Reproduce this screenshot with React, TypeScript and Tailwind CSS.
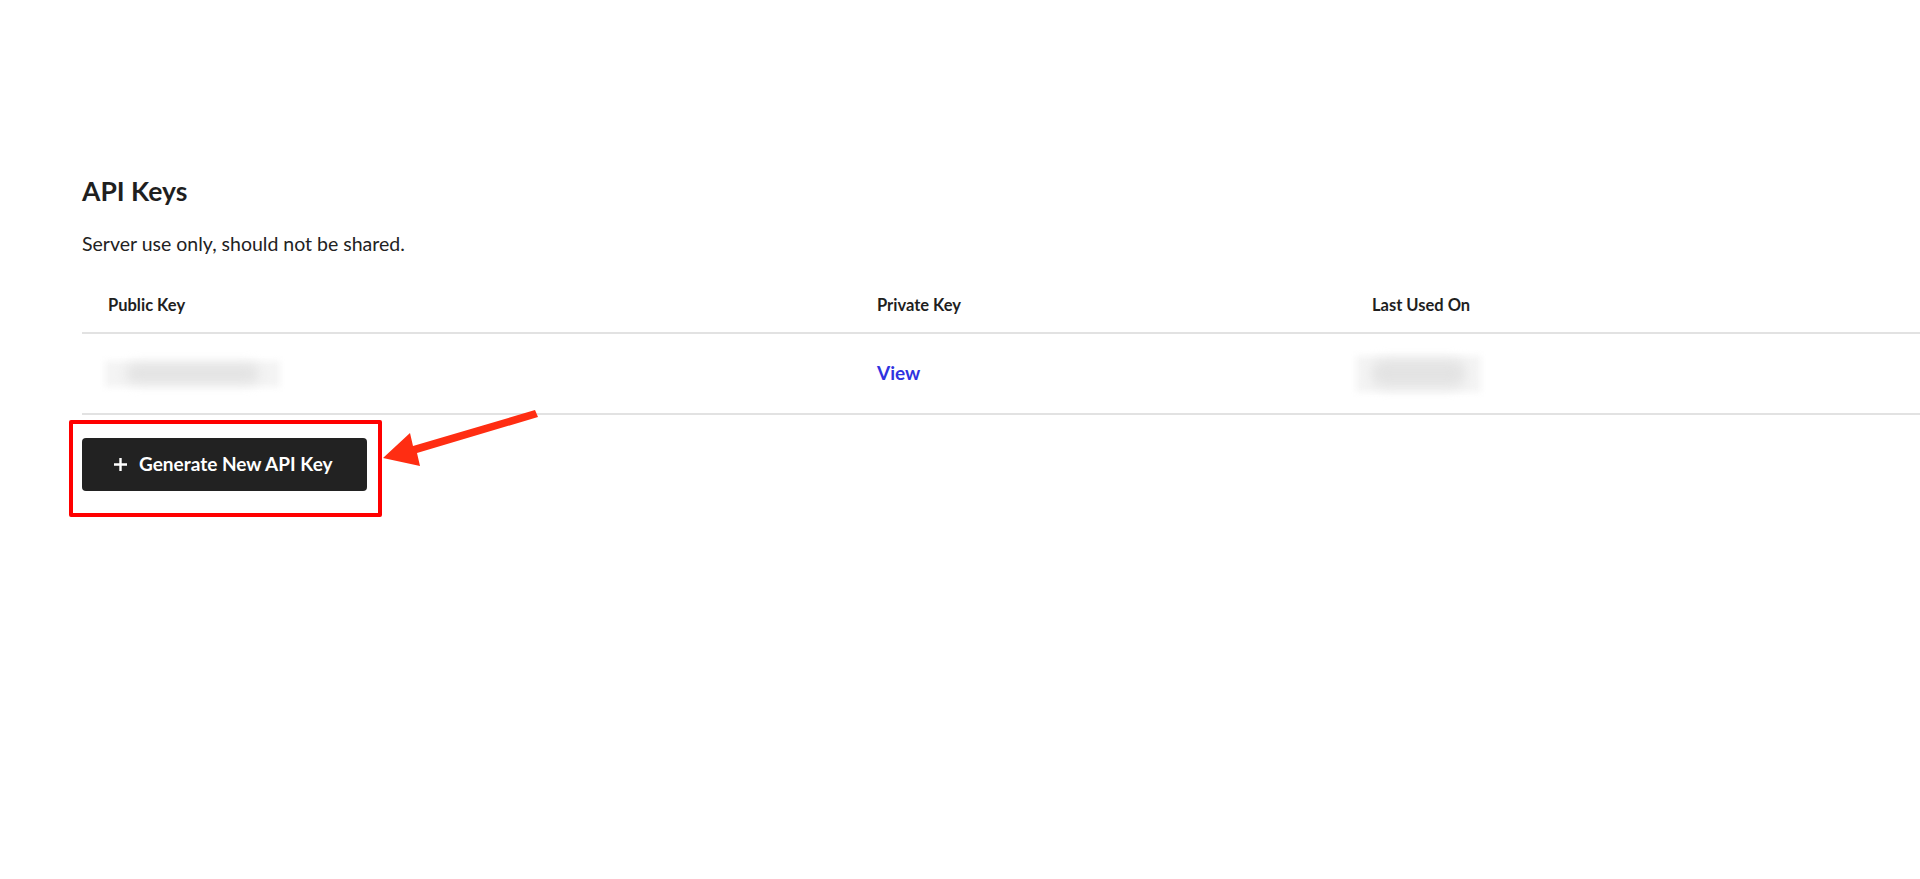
const font = { fontFamily: "Lato, 'Noto Sans', sans-serif" };

function Blur({ className }: { className: string }) {
  return (
    <div className={`relative ${className}`}>
      <div className="absolute inset-0 bg-[#f4f4f4] blur-[3px]" />
      <div className="absolute inset-x-[12%] inset-y-[12%] rounded-full bg-[#e3e3e3] blur-[6px]" />
    </div>
  );
}

function Arrow() {
  return (
    <svg
      className="pointer-events-none absolute left-0 top-0"
      width="560"
      height="480"
      viewBox="0 0 560 480"
    >
      <polygon
        points="383,458 410,433 413,446 535,410 538,417 417,453 420,466"
        fill="#ff2d12"
      />
    </svg>
  );
}

export default function App() {
  return (
    <div className="relative min-h-screen bg-white text-[#222222]" style={font}>
      <div className="pl-[82px] pt-[175px]">
        <h1 className="text-[26.5px] font-bold leading-8 text-[#1f1f1f]">API Keys</h1>
        <p className="mt-[25px] text-[19.5px] leading-6 text-[#222222]">
          Server use only, should not be shared.
        </p>

        <div className="mt-[23px]">
          <div className="grid h-[55px] grid-cols-[769px_495px_1fr] items-center border-b-2 border-[#e2e2e2] text-[16.5px] font-bold text-[#1f1f1f]">
            <div className="pl-[26px]">Public Key</div>
            <div className="pl-[26px]">Private Key</div>
            <div className="pl-[26px]">Last Used On</div>
          </div>
          <div className="grid h-[81px] grid-cols-[769px_495px_1fr] items-center border-b-2 border-[#e2e2e2]">
            <div className="pl-[23px]">
              <Blur className="h-[26px] w-[175px]" />
            </div>
            <div className="pl-[26px]">
              <a className="text-[19px] font-bold text-[#2f33e0]" href="#">
                View
              </a>
            </div>
            <div className="pl-[10px]">
              <Blur className="h-[36px] w-[125px]" />
            </div>
          </div>
        </div>

        <button className="mt-[23px] flex h-[53px] w-[285px] items-center gap-[11px] rounded-[4px] bg-[#222222] pl-[31px] text-[19px] font-bold text-white">
          <svg width="15" height="15" viewBox="0 0 15 15">
            <path d="M7.5 1v13M1 7.5h13" stroke="white" strokeWidth="2.4" />
          </svg>
          Generate New API Key
        </button>
      </div>

      <div className="pointer-events-none absolute left-[69px] top-[420px] h-[97px] w-[313px] rounded-[2px] border-4 border-[#ff0000]" />
      <Arrow />
    </div>
  );
}
